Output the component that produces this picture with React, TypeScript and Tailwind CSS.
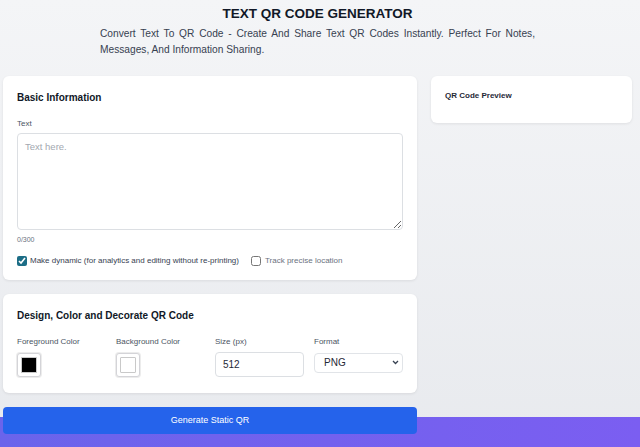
import React from 'react';

/**
 * Text QR code generator page — form on the left, preview card on the right.
 */
const ColorSwatch = ({ color }: { color: string }) => (
    <div className="w-[24px] h-[24px] rounded-[3px] border border-[#d4d4d8] bg-white p-[3px] shadow-[0_0_0_1px_#ececec]">
        <div className="w-full h-full rounded-[1px] border border-[#c9c9c9]" style={{ background: color }} />
    </div>
);

export default function App() {
    return (
        <div
            className="relative min-h-[447px] overflow-hidden bg-gradient-to-b from-[#f4f5f7] to-[#e8eaee] text-[#1f2937]"
            style={{ fontFamily: '"Liberation Sans", Arial, sans-serif' }}
        >
            {/* purple band behind the bottom of the page */}
            <div className="absolute left-0 right-0 top-[417px] bottom-0 bg-gradient-to-r from-[#6a64eb] to-[#7b5ef1]" />

            <div className="relative">
                {/* Header */}
                <div className="ml-[100px] w-[435px] pt-[5px]">
                    <h1 className="text-center text-[13.5px] leading-[17px] font-bold text-[#111827]">
                        TEXT QR CODE GENERATOR
                    </h1>
                    <p className="mt-[4px] text-[10.2px] leading-[16px] text-[#374151] text-justify">
                        Convert Text To QR Code - Create And Share Text QR Codes Instantly. Perfect For Notes,
                        Messages, And Information Sharing.
                    </p>
                </div>

                <div className="flex gap-[14px] pl-[3px] pr-[8px] mt-[18px] items-start">
                    {/* Left column */}
                    <div className="w-[414px] flex flex-col gap-[14px]">
                        <div className="bg-white rounded-[6px] shadow-[0_1px_3px_rgba(0,0,0,0.08)] px-[14px] pt-[14px] pb-[13px]">
                            <h2 className="text-[10px] leading-[16px] font-bold text-[#111827]">Basic Information</h2>
                            <label className="block mt-[12px] text-[8px] leading-[12px] text-[#4b5563]">Text</label>
                            <textarea
                                className="mt-[3px] block w-full h-[97px] rounded-[4px] border border-[#dcdfe3] px-[7px] py-[6px] text-[9.5px] outline-none placeholder:text-[#a3a8b0]"
                                placeholder="Text here."
                            />
                            <div className="mt-[5px] text-[7px] leading-[10px] text-[#6b7280]">0/300</div>
                            <div className="mt-[10px] flex items-center h-[12px] text-[8px] leading-[12px]">
                                <input
                                    type="checkbox"
                                    defaultChecked
                                    className="w-[10px] h-[10px] m-0 accent-[#1c6d86]"
                                />
                                <span className="ml-[3px] text-[#374151]">
                                    Make dynamic (for analytics and editing without re-printing)
                                </span>
                                <input
                                    type="checkbox"
                                    className="ml-[12px] w-[10px] h-[10px] m-0 accent-[#1c6d86]"
                                />
                                <span className="ml-[4px] text-[#6b7280]">Track precise location</span>
                            </div>
                        </div>

                        <div className="bg-white rounded-[6px] shadow-[0_1px_3px_rgba(0,0,0,0.08)] px-[14px] pt-[14px] pb-[16px]">
                            <h2 className="text-[10px] leading-[16px] font-bold text-[#111827]">
                                Design, Color and Decorate QR Code
                            </h2>
                            <div className="mt-[12px] grid grid-cols-4 gap-x-[10px] text-[8px] leading-[12px] text-[#4b5563]">
                                <div>
                                    <div>Foreground Color</div>
                                    <div className="mt-[5px]">
                                        <ColorSwatch color="#000000" />
                                    </div>
                                </div>
                                <div>
                                    <div>Background Color</div>
                                    <div className="mt-[5px]">
                                        <ColorSwatch color="#ffffff" />
                                    </div>
                                </div>
                                <div>
                                    <div>Size (px)</div>
                                    <input
                                        type="text"
                                        defaultValue="512"
                                        className="mt-[4px] block w-full h-[25px] rounded-[4px] border border-[#dcdfe3] px-[7px] text-[10px] text-[#1f2937] outline-none"
                                    />
                                </div>
                                <div>
                                    <div>Format</div>
                                    <div className="relative mt-[5px]">
                                        <select className="block w-full h-[20px] appearance-none rounded-[4px] border border-[#e1e4e8] bg-white pl-[9px] text-[10px] text-[#1f2937] outline-none">
                                            <option>PNG</option>
                                            <option>SVG</option>
                                            <option>JPG</option>
                                        </select>
                                        <svg
                                            className="pointer-events-none absolute right-[4px] top-[7px]"
                                            width="7"
                                            height="5"
                                            viewBox="0 0 7 5"
                                        >
                                            <path d="M1 1l2.5 2.5L6 1" fill="none" stroke="#374151" strokeWidth="1.3" />
                                        </svg>
                                    </div>
                                </div>
                            </div>
                        </div>

                        <button className="h-[27px] w-full rounded-[4px] bg-[#2563eb] text-[9px] text-white">
                            Generate Static QR
                        </button>
                    </div>

                    {/* Right column */}
                    <div className="flex-1 bg-white rounded-[6px] shadow-[0_1px_3px_rgba(0,0,0,0.08)] px-[14px] pt-[14px] h-[47px]">
                        <h3 className="text-[8px] leading-[12px] font-bold text-[#1f2937]">QR Code Preview</h3>
                    </div>
                </div>
            </div>
        </div>
    );
}
